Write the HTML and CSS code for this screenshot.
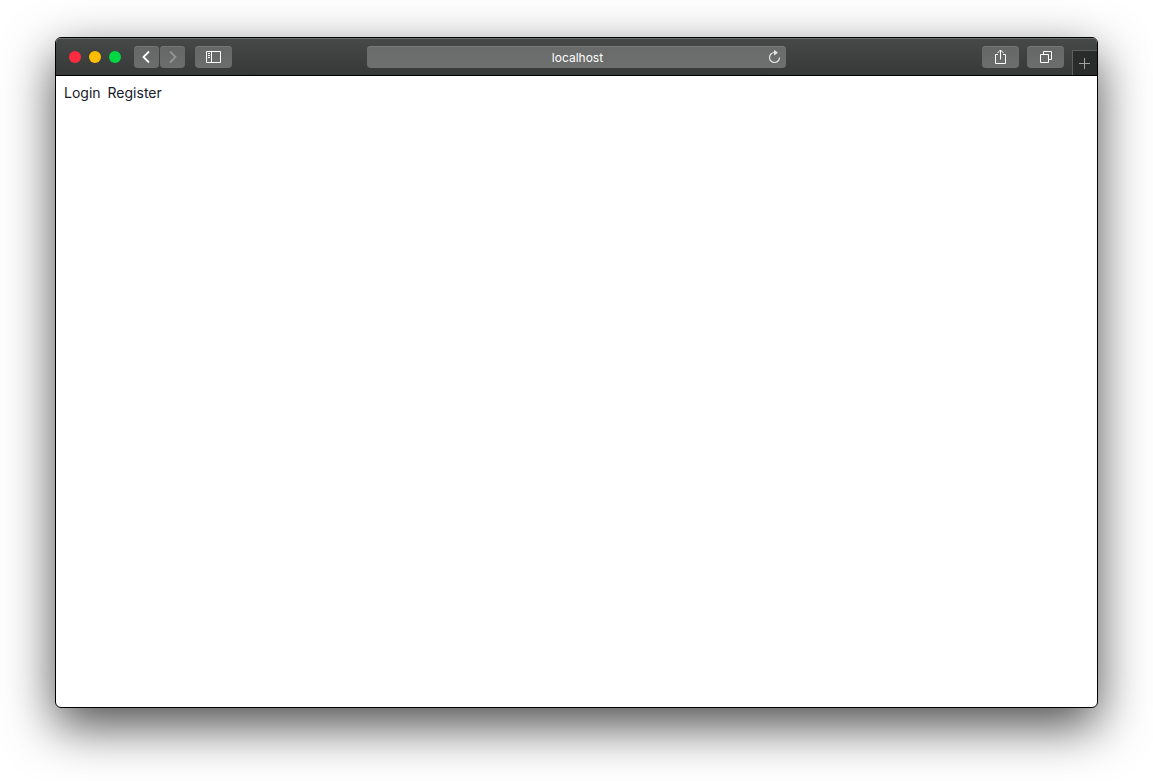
FILE: index.html
```html
<!DOCTYPE html>
<html lang="en">

<head>
    <meta charset="UTF-8">
    <meta name="viewport" content="width=device-width, initial-scale=1.0">
    <title>localhost</title>
    <link rel="stylesheet" href="styles.css">
</head>

<body>
    <div class="window">
        <header class="toolbar">
            <div class="toolbar-left">
                <div class="lights">
                    <button class="light red" type="button" aria-label="Close"></button>
                    <button class="light yellow" type="button" aria-label="Minimize"></button>
                    <button class="light green" type="button" aria-label="Full screen"></button>
                </div>
                <div class="history">
                    <button class="btn narrow" type="button" aria-label="Back">
                        <svg width="25" height="22" viewBox="0 0 25 22"><path d="M15 5.5 9.5 11l5.5 5.5" stroke-width="1.8" /></svg>
                    </button>
                    <button class="btn narrow" type="button" aria-label="Forward" disabled>
                        <svg width="25" height="22" viewBox="0 0 25 22"><path d="M10 5.5 15.5 11 10 16.5" stroke-width="1.8" /></svg>
                    </button>
                </div>
                <button class="btn" type="button" aria-label="Show sidebar">
                    <svg width="37" height="22" viewBox="0 0 37 22"><path d="M11.5 5.5h14v11h-14zM16.5 5.5v11M13 7.5h2M13 9.5h2M13 11.5h2" /></svg>
                </button>
            </div>
            <div class="address">
                <input class="address-input" type="text" value="localhost" aria-label="Address">
                <button class="reload" type="button" aria-label="Reload">
                    <svg width="14" height="16" viewBox="0 0 14 16">
                        <path d="M8.500 3.500H7.500A5 5 0 1 0 12.500 8.500" stroke-width="1.2" />
                        <path class="fill" d="M7 .8 11 3.700 7 6.600z" />
                    </svg>
                </button>
            </div>
            <div class="toolbar-right">
                <button class="btn" type="button" aria-label="Share">
                    <svg width="37" height="22" viewBox="0 0 37 22"><path d="M16 8.500h-2.500v9h10v-9H21M18.500 13.500V4M15.500 7l3-3 3 3" /></svg>
                </button>
                <button class="btn" type="button" aria-label="Show all tabs">
                    <svg width="37" height="22" viewBox="0 0 37 22"><path d="M13.500 8.500h8v8h-8zM16.500 8.500v-3h8v8h-3" /></svg>
                </button>
                <button class="new-tab" type="button" aria-label="New tab">
                    <svg width="24" height="24" viewBox="0 0 24 24"><path d="M6 12.500h11M11.500 7v11" /></svg>
                </button>
            </div>
        </header>
        <main class="page">
            <nav class="links">
                <a href="#login">Login</a>
                <a href="#register">Register</a>
            </nav>
        </main>
    </div>
</body>

</html>
```
FILE: styles.css
```css
* {
    box-sizing: border-box;
    margin: 0;
    padding: 0;
}

body {
    display: flex;
    min-height: 100vh;
    padding: 37px 55px 73px;
    background: #fff;
    font-family: Inter, "Liberation Sans", sans-serif;
    overflow: hidden;
}

button,
input {
    border: 0;
    font: inherit;
}

svg {
    display: block;
    fill: none;
    stroke: currentColor;
}

.window {
    display: flex;
    flex-direction: column;
    flex: 1;
    border: 1px solid #000;
    border-radius: 6px;
    background: #fff;
    box-shadow: 0 18px 50px rgba(0, 0, 0, .7);
    overflow: hidden;
}

/* toolbar */

.toolbar {
    display: grid;
    grid-template-columns: 1fr 40.25% 1fr;
    align-items: center;
    height: 38px;
    border-bottom: 1px solid #000;
    background: linear-gradient(#454948, #363938);
    box-shadow: inset 0 1px #6b6e6d;
}

.toolbar-left {
    display: flex;
    align-items: center;
    padding-left: 13px;
}

.lights {
    display: flex;
    gap: 8px;
    margin-right: 13px;
}

.light {
    width: 12px;
    height: 12px;
    border-radius: 50%;
}

.red {
    background: #ff2b40;
}

.yellow {
    background: #ffbd00;
}

.green {
    background: #00d742;
}

.history {
    display: flex;
    gap: 1px;
    margin-right: 10px;
}

.btn {
    width: 37px;
    height: 22px;
    border-radius: 4px;
    background: linear-gradient(#636766, #6b6e6d);
    box-shadow: inset 0 1px #737675;
    color: #fff;
}

.narrow {
    width: 25px;
}

.btn:disabled {
    color: #929594;
}

/* address bar */

.address {
    position: relative;
}

.address-input {
    display: block;
    width: 100%;
    height: 22px;
    padding: 2px 0 0 2px;
    border-radius: 4px;
    background: linear-gradient(#686b6a, #6e706f);
    box-shadow: inset 0 1px #777a79;
    color: #fff;
    font-size: 12px;
    text-align: center;
}

.reload {
    position: absolute;
    top: 3px;
    right: 5px;
    background: none;
    color: #e4e5e5;
}

.fill {
    fill: currentColor;
    stroke: none;
}

.toolbar-right {
    display: flex;
    align-items: center;
    align-self: stretch;
    justify-content: flex-end;
    gap: 8px;
}

.new-tab {
    align-self: flex-end;
    width: 25px;
    height: 25px;
    border-top: 1px solid #5c5f5e;
    border-left: 1px solid #5c5f5e;
    background: #2a2c2b;
    color: #a0a2a1;
}

/* page */

.page {
    flex: 1;
    padding: 8px;
}

.links {
    display: flex;
    gap: 7px;
    font-size: 14px;
    line-height: 18px;
}

.links a {
    color: #16202a;
    text-decoration: none;
}
```
